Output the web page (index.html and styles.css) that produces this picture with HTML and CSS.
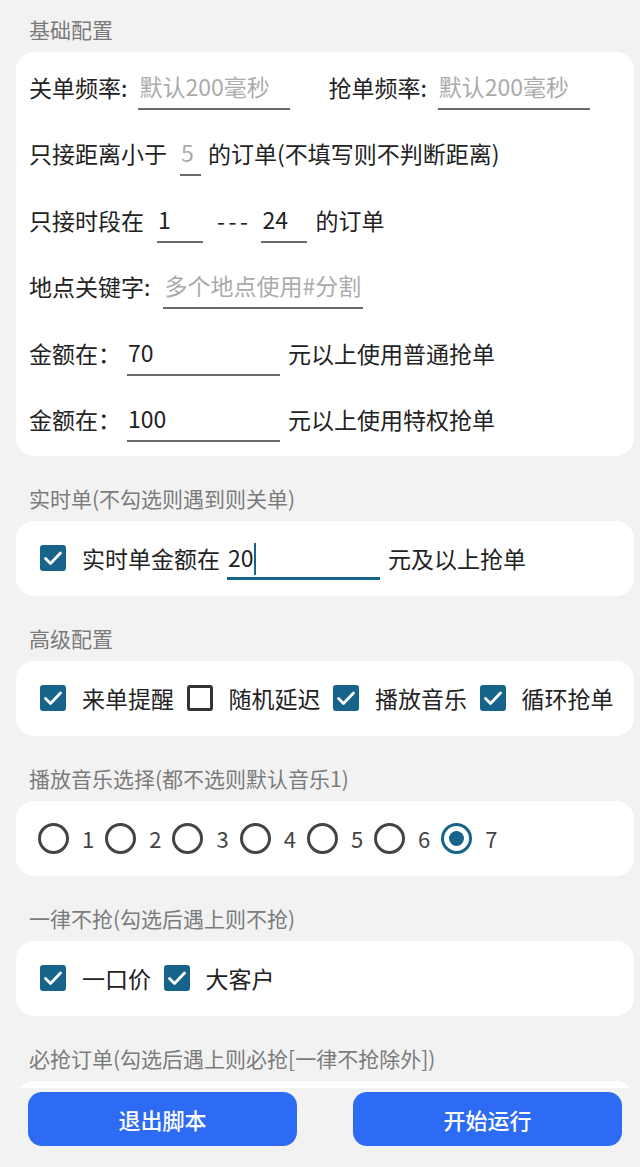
FILE: index.html
```html
<!DOCTYPE html>
<html lang="zh-CN">
<head>
    <meta charset="UTF-8">
    <meta name="viewport" content="width=device-width, initial-scale=1.0">
    <title>抢单配置</title>
    <link rel="stylesheet" href="styles.css">
</head>
<body>
    <div class="page">
        <!-- 基础配置 -->
        <h3 class="title first">基础配置</h3>
        <div class="card form">
            <div class="row">
                <span>关单频率:</span>
                <span class="field f-rate ph">默认200毫秒</span>
                <span class="gap-left">抢单频率:</span>
                <span class="field f-rate ph">默认200毫秒</span>
            </div>
            <div class="row">
                <span>只接距离小于</span>
                <span class="field f-dist ph">5</span>
                <span>的订单(不填写则不判断距离)</span>
            </div>
            <div class="row">
                <span>只接时段在</span>
                <span class="field f-hour">1</span>
                <span class="dash">---</span>
                <span class="field f-hour f-hour2">24</span>
                <span>的订单</span>
            </div>
            <div class="row">
                <span>地点关键字:</span>
                <span class="field f-place ph">多个地点使用#分割</span>
            </div>
            <div class="row">
                <span>金额在：</span>
                <span class="field f-money">70</span>
                <span>元以上使用普通抢单</span>
            </div>
            <div class="row">
                <span>金额在：</span>
                <span class="field f-money">100</span>
                <span>元以上使用特权抢单</span>
            </div>
        </div>

        <!-- 实时单 -->
        <h3 class="title">实时单(不勾选则遇到则关单)</h3>
        <div class="card line">
            <span class="box"><svg width="26" height="26" viewBox="0 0 26 26"><polyline points="5.5,13.5 10.5,18.5 20.5,8" fill="none" stroke="#fff" stroke-width="2.8" stroke-linecap="round" stroke-linejoin="round"/></svg></span>
            <span>实时单金额在</span>
            <span class="field f-live focused">20<i class="caret"></i></span>
            <span>元及以上抢单</span>
        </div>

        <!-- 高级配置 -->
        <h3 class="title">高级配置</h3>
        <div class="card line">
            <label class="check"><span class="box"><svg width="26" height="26" viewBox="0 0 26 26"><polyline points="5.5,13.5 10.5,18.5 20.5,8" fill="none" stroke="#fff" stroke-width="2.8" stroke-linecap="round" stroke-linejoin="round"/></svg></span>来单提醒</label>
            <label class="check"><span class="box off"></span>随机延迟</label>
            <label class="check"><span class="box"><svg width="26" height="26" viewBox="0 0 26 26"><polyline points="5.5,13.5 10.5,18.5 20.5,8" fill="none" stroke="#fff" stroke-width="2.8" stroke-linecap="round" stroke-linejoin="round"/></svg></span>播放音乐</label>
            <label class="check"><span class="box"><svg width="26" height="26" viewBox="0 0 26 26"><polyline points="5.5,13.5 10.5,18.5 20.5,8" fill="none" stroke="#fff" stroke-width="2.8" stroke-linecap="round" stroke-linejoin="round"/></svg></span>循环抢单</label>
        </div>

        <!-- 播放音乐选择 -->
        <h3 class="title">播放音乐选择(都不选则默认音乐1)</h3>
        <div class="card line radios">
            <label class="radio"><span class="dot"></span>1</label>
            <label class="radio"><span class="dot"></span>2</label>
            <label class="radio"><span class="dot"></span>3</label>
            <label class="radio"><span class="dot"></span>4</label>
            <label class="radio"><span class="dot"></span>5</label>
            <label class="radio"><span class="dot"></span>6</label>
            <label class="radio"><span class="dot on"></span>7</label>
        </div>

        <!-- 一律不抢 -->
        <h3 class="title">一律不抢(勾选后遇上则不抢)</h3>
        <div class="card line">
            <label class="check"><span class="box"><svg width="26" height="26" viewBox="0 0 26 26"><polyline points="5.5,13.5 10.5,18.5 20.5,8" fill="none" stroke="#fff" stroke-width="2.8" stroke-linecap="round" stroke-linejoin="round"/></svg></span>一口价</label>
            <label class="check"><span class="box"><svg width="26" height="26" viewBox="0 0 26 26"><polyline points="5.5,13.5 10.5,18.5 20.5,8" fill="none" stroke="#fff" stroke-width="2.8" stroke-linecap="round" stroke-linejoin="round"/></svg></span>大客户</label>
        </div>

        <!-- 必抢订单 -->
        <h3 class="title">必抢订单(勾选后遇上则必抢[一律不抢除外])</h3>
        <div class="card line"></div>
    </div>

    <div class="bottom-bar">
        <button class="btn">退出脚本</button>
        <button class="btn">开始运行</button>
    </div>
</body>
</html>
```

FILE: styles.css
```css
html, body {
    margin: 0;
    padding: 0;
    overflow: hidden;
}

body {
    font-family: "Noto Sans CJK SC", "Noto Sans", sans-serif;
    background: #f2f2f2;
    color: #222;
    font-size: 23px;
}

.page {
    padding-bottom: 100px;
}

.title {
    margin: 27px 0 0 29px;
    font-size: 21px;
    line-height: 30px;
    font-weight: normal;
    color: #7b7b7b;
}

.title.first {
    margin-top: 14px;
}

.card {
    background: #fff;
    border-radius: 18px;
    margin: 8px 6px 0 16px;
}

/* 基础配置表单 */
.form {
    display: flex;
    flex-direction: column;
    gap: 20.4px;
    padding: 12px 13px 14px;
}

.row {
    display: flex;
    align-items: center;
    height: 46px;
    white-space: nowrap;
}

.field {
    display: inline-block;
    box-sizing: border-box;
    height: 46px;
    line-height: 44px;
    border-bottom: 2px solid #6a6a6a;
    color: #222;
    padding-left: 1px;
    white-space: nowrap;
}

.field.ph {
    color: #ababab;
}

.f-rate {
    width: 152px;
    margin: 0 0 0 11px;
}

.gap-left {
    margin-left: 38px;
}

.f-dist {
    width: 21px;
    margin: 0 7px 0 13px;
}

.f-hour {
    width: 46px;
    margin: 0 14px 0 13px;
}

.f-hour2 {
    margin: 0 8px 0 10px;
}

.dash {
    letter-spacing: 3.5px;
}

.f-place {
    width: 200px;
    margin-left: 13px;
}

.f-money {
    width: 153px;
    margin: 0 8px 0 6px;
}

/* 单行卡片 */
.line {
    height: 75px;
    display: flex;
    align-items: center;
    padding-left: 24px;
    white-space: nowrap;
}

.f-live {
    width: 153px;
    margin: 0 8px 0 7px;
    border-bottom: 3px solid #16648a;
    height: 44px;
    line-height: 42px;
}

.caret {
    display: inline-block;
    width: 2.5px;
    height: 32px;
    background: #16648a;
    vertical-align: middle;
    margin-top: -4px;
}

.box {
    width: 26px;
    height: 26px;
    box-sizing: border-box;
    border-radius: 3px;
    background: #16648a;
    margin-right: 16px;
    display: flex;
    flex-shrink: 0;
}

.box.off {
    background: none;
    border: 3px solid #333;
}

.check {
    display: flex;
    align-items: center;
    margin-right: 12.5px;
}

/* 单选 */
.radios {
    padding-left: 22px;
}

.radio {
    display: flex;
    align-items: center;
    margin-right: 11px;
    font-size: 22px;
    color: #444;
}

.dot {
    width: 31px;
    height: 31px;
    box-sizing: border-box;
    border: 3px solid #444;
    border-radius: 50%;
    margin-right: 13px;
    display: flex;
    align-items: center;
    justify-content: center;
}

.dot.on {
    border-color: #16648a;
}

.dot.on::after {
    content: "";
    width: 15px;
    height: 15px;
    border-radius: 50%;
    background: #16648a;
}

/* 底部按钮 */
.bottom-bar {
    position: fixed;
    left: 0;
    right: 0;
    bottom: 0;
    height: 79px;
    box-sizing: border-box;
    padding: 4px 18px 21px 28px;
    background: #f2f2f2;
    display: flex;
    justify-content: space-between;
}

.btn {
    width: 269px;
    height: 54px;
    border: none;
    border-radius: 14px;
    background: #2d6bf5;
    color: #fff;
    font-family: "Noto Sans CJK SC", sans-serif;
    font-size: 22px;
    font-weight: 500;
}
```
